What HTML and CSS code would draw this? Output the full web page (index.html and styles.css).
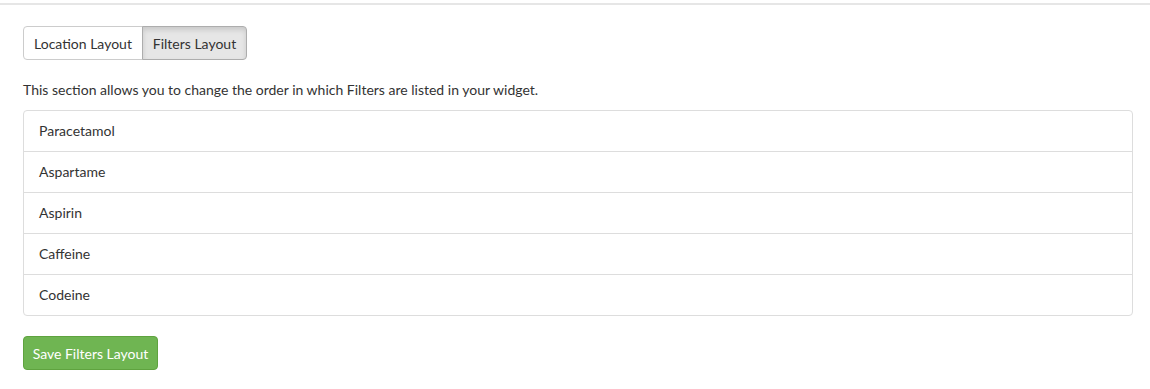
FILE: index.html
```html
<!DOCTYPE html>
<html>
<head>
<meta charset="utf-8">
<link rel="stylesheet" href="styles.css">
</head>
<body>
<div class="topline"></div>
<div class="page">
  <div class="btn-group">
    <button class="btn">Location Layout</button>
    <button class="btn active">Filters Layout</button>
  </div>
  <p class="desc">This section allows you to change the order in which Filters are listed in your widget.</p>
  <ul class="list">
    <li>Paracetamol</li>
    <li>Aspartame</li>
    <li>Aspirin</li>
    <li>Caffeine</li>
    <li>Codeine</li>
  </ul>
  <button class="btn-save">Save Filters Layout</button>
</div>
</body>
</html>
```
FILE: styles.css
```css
html, body {
  margin: 0;
  padding: 0;
  background: #fff;
}
body {
  font-family: Lato, "Open Sans", sans-serif;
  font-size: 14px;
  color: #333;
}
.topline {
  margin-top: 3px;
  height: 2px;
  background: #e6e6e6;
}
.page {
  padding: 21px 17px 0 23px;
}
.btn-group {
  display: flex;
}
.btn {
  font-family: inherit;
  font-size: 14px;
  color: #333;
  background: #fff;
  border: 1px solid #ccc;
  height: 34px;
  padding: 0;
  margin: 0;
  border-radius: 4px;
}
.btn-group .btn:first-child {
  border-top-right-radius: 0;
  border-bottom-right-radius: 0;
  width: 120px;
}
.btn-group .btn:last-child {
  border-top-left-radius: 0;
  border-bottom-left-radius: 0;
  margin-left: -1px;
  width: 105px;
}
.btn.active {
  background: #e6e6e6;
  border-color: #adadad;
  box-shadow: inset 0 3px 5px rgba(0,0,0,0.125);
}
.desc {
  margin: 20px 0 10px 0;
  line-height: 20px;
}
.list {
  list-style: none;
  margin: 0;
  padding: 0;
  border: 1px solid #ddd;
  border-radius: 4px;
}
.list li {
  height: 40px;
  line-height: 40px;
  padding: 0 15px;
  border-top: 1px solid #ddd;
}
.list li:first-child {
  border-top: none;
}
.btn-save {
  margin-top: 20px;
  font-family: inherit;
  font-size: 14px;
  color: #fff;
  background: #6fb552;
  border: 1px solid #5fa33f;
  border-radius: 4px;
  height: 34px;
  width: 135px;
  padding: 0;
}
```
